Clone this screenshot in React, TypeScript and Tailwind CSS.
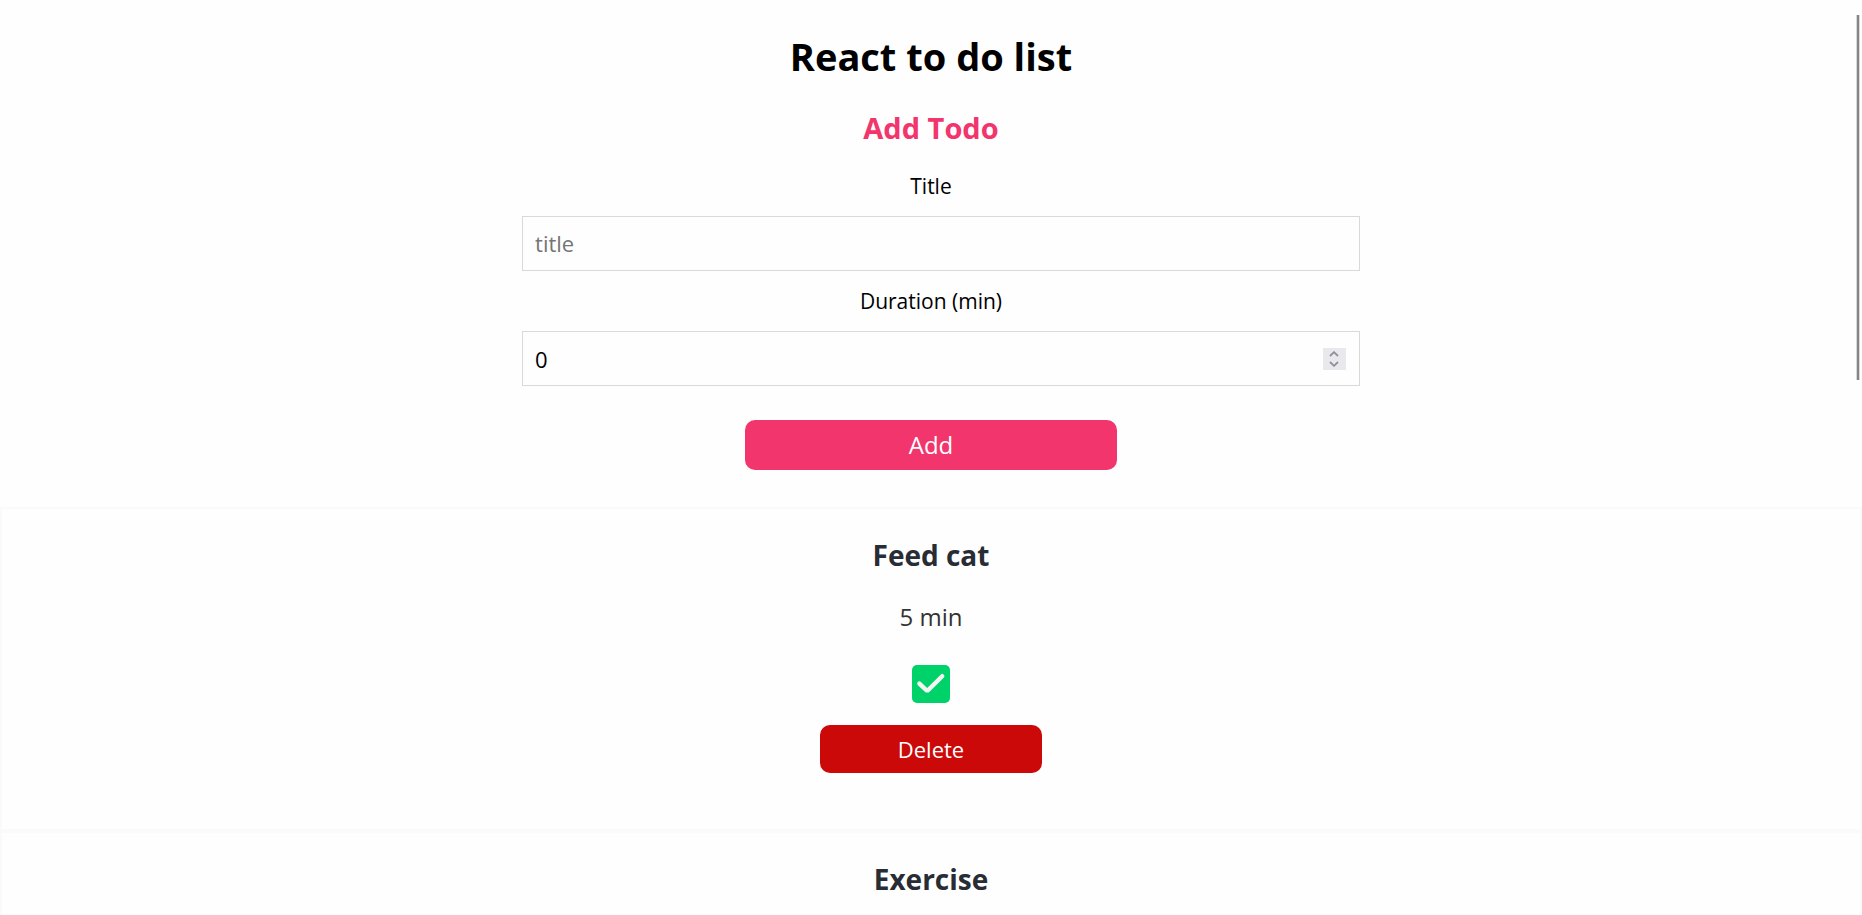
import { useState } from "react";

type Todo = { id: number; title: string; duration?: number; done: boolean };

const initialTodos: Todo[] = [
  { id: 1, title: "Feed cat", duration: 5, done: true },
  { id: 2, title: "Exercise", done: false },
];

function Chevron({ up }: { up?: boolean }) {
  return (
    <svg viewBox="0 0 10 6" className="h-[6px] w-[10px]" fill="none" stroke="#8f8f9d" strokeWidth="1.8" aria-hidden="true">
      <path d={up ? "M1 5 L5 1.2 L9 5" : "M1 1 L5 4.8 L9 1"} />
    </svg>
  );
}

type TodoCardProps = { todo: Todo; onToggle: () => void; onDelete: () => void };

function TodoCard({ todo, onToggle, onDelete }: TodoCardProps) {
  return (
    <li className="flex min-h-[324px] flex-col items-center border-2 border-[#fafafa] pt-[26px]">
      <h3 className="text-[28px] leading-[40px] font-bold text-[#282c34]">{todo.title}</h3>
      {todo.duration !== undefined && (
        <>
          <p className="mt-[26px] text-[24px] leading-[32px] text-[#333333]">{todo.duration} min</p>
          <label className="relative mt-8 block size-[38px]">
            <input
              type="checkbox"
              aria-label="Completed"
              checked={todo.done}
              onChange={onToggle}
              className="peer block size-full appearance-none rounded-[5px] bg-[#eeeeee] checked:bg-[#00d26a]"
            />
            <svg
              viewBox="0 0 38 38"
              className="pointer-events-none invisible absolute inset-0 size-full peer-checked:visible"
              fill="none"
              stroke="#f4f4f4"
              strokeWidth="4.4"
              strokeLinecap="round"
              aria-hidden="true"
            >
              <path d="M7.4 18.6 L15.2 26 L30.2 11.2" strokeLinejoin="bevel" />
            </svg>
          </label>
          <button
            type="button"
            onClick={onDelete}
            className="mt-[22px] h-12 w-[12%] rounded-[10px] bg-[#cb0909] text-[22px] leading-[32px] text-white"
          >
            Delete
          </button>
        </>
      )}
    </li>
  );
}

export default function App() {
  const [todos, setTodos] = useState(initialTodos);
  const [title, setTitle] = useState("");
  const [duration, setDuration] = useState(0);

  const addTodo = () => {
    if (!title) return;
    setTodos([...todos, { id: Date.now(), title, duration, done: false }]);
    setTitle("");
    setDuration(0);
  };

  return (
    <div className="h-screen overflow-y-auto bg-[#fefefe] font-['Open_Sans','Noto_Sans',sans-serif] text-black [scrollbar-width:none]">
      <main className="text-center">
        <h1 className="pt-7 text-[38px] leading-[56px] font-bold">React to do list</h1>
        <form
          className="flex flex-col items-center pb-[37px]"
          onSubmit={(event) => {
            event.preventDefault();
            addTodo();
          }}
        >
          <h2 className="mt-6 text-[29px] leading-[40px] font-bold text-[#f2356d]">Add Todo</h2>
          <label htmlFor="title" className="mt-[22px] text-[21px] leading-[32px]">
            Title
          </label>
          <div className="mt-[14px] ml-5 flex h-[55px] w-[45%] border border-[#d9d9d9]">
            <input
              id="title"
              type="text"
              placeholder="title"
              value={title}
              onChange={(event) => setTitle(event.target.value)}
              className="min-w-0 flex-1 px-3 text-[22px] outline-none placeholder:text-[#757575]"
            />
          </div>
          <label htmlFor="duration" className="mt-[14px] text-[21px] leading-[32px]">
            Duration (min)
          </label>
          <div className="mt-[14px] ml-5 flex h-[55px] w-[45%] items-center border border-[#d9d9d9] pr-[13px]">
            <input
              id="duration"
              type="number"
              value={duration}
              onChange={(event) => setDuration(Number(event.target.value))}
              className="h-full min-w-0 flex-1 appearance-none px-3 text-[22px] outline-none [-moz-appearance:textfield] [&::-webkit-inner-spin-button]:appearance-none"
            />
            <div className="flex h-[22px] w-[23px] flex-col justify-center gap-1 bg-[#e9e9ed]">
              <button type="button" aria-label="Increase" className="flex justify-center" onClick={() => setDuration(duration + 1)}>
                <Chevron up />
              </button>
              <button type="button" aria-label="Decrease" className="flex justify-center" onClick={() => setDuration(duration - 1)}>
                <Chevron />
              </button>
            </div>
          </div>
          <button type="submit" className="mt-[34px] h-[50px] w-[20%] rounded-[10px] bg-[#f2356d] text-[24px] leading-[32px] text-white">
            Add
          </button>
        </form>
        <ul>
          {todos.map((todo) => (
            <TodoCard
              key={todo.id}
              todo={todo}
              onToggle={() => setTodos(todos.map((item) => (item.id === todo.id ? { ...item, done: !item.done } : item)))}
              onDelete={() => setTodos(todos.filter((item) => item.id !== todo.id))}
            />
          ))}
        </ul>
      </main>
      <div className="pointer-events-none fixed top-[15px] right-[2px] h-[365px] w-1 border-x border-[#d8d8d8] bg-[#858585]" aria-hidden="true" />
    </div>
  );
}
